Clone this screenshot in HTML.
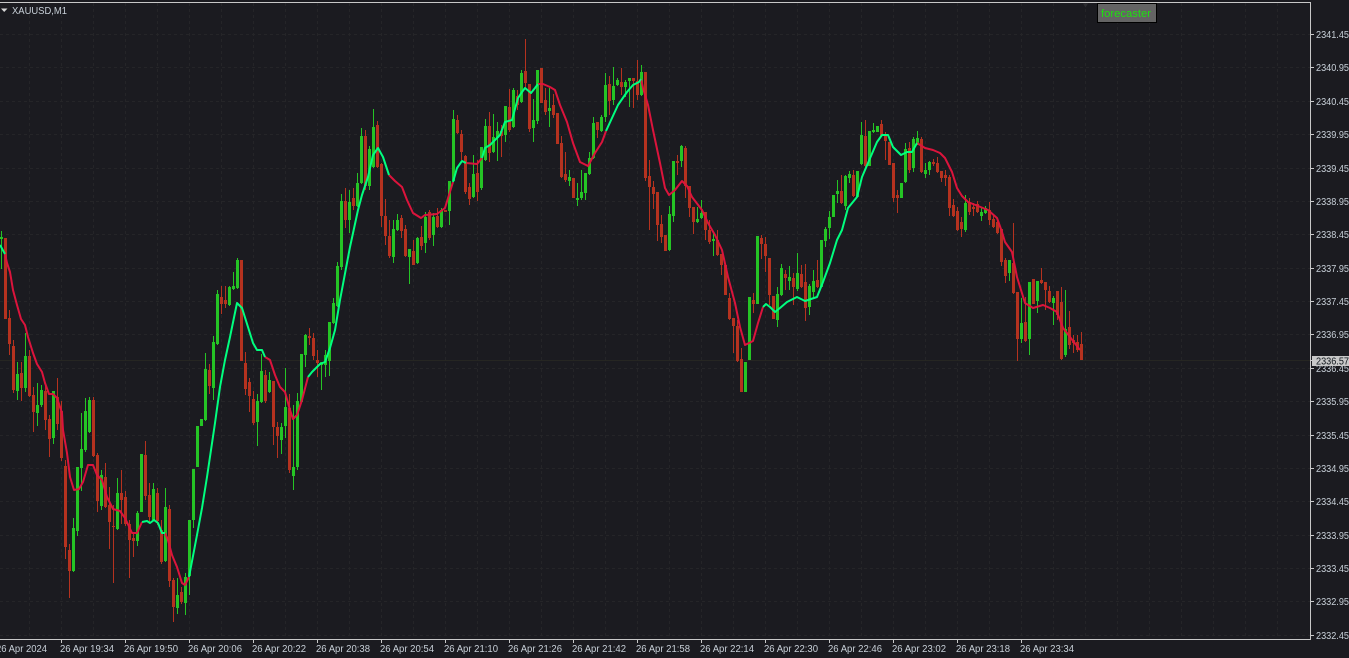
<!DOCTYPE html>
<html><head><meta charset="utf-8"><title>XAUUSD,M1</title>
<style>
html,body{margin:0;padding:0;background:#1b1b20;width:1349px;height:658px;overflow:hidden}
svg{display:block;font-family:"Liberation Sans",sans-serif}
.p text{font-size:10px;fill:#c8d0d8}
.t text{font-size:10px;fill:#c8d0d8}
</style></head><body>
<svg width="1349" height="658" viewBox="0 0 1349 658" xmlns="http://www.w3.org/2000/svg">
<rect width="1349" height="658" fill="#1b1b20"/>
<g stroke="#252528" stroke-width="1" stroke-dasharray="3 3" fill="none" shape-rendering="crispEdges">
<path d="M29.5 3V639M61.5 3V639M93.5 3V639M125.5 3V639M157.5 3V639M189.5 3V639M221.5 3V639M253.5 3V639M285.5 3V639M317.5 3V639M349.5 3V639M381.5 3V639M413.5 3V639M445.5 3V639M477.5 3V639M509.5 3V639M541.5 3V639M573.5 3V639M605.5 3V639M637.5 3V639M669.5 3V639M701.5 3V639M733.5 3V639M765.5 3V639M797.5 3V639M829.5 3V639M861.5 3V639M893.5 3V639M925.5 3V639M957.5 3V639M989.5 3V639M1021.5 3V639M1053.5 3V639M1085.5 3V639M1117.5 3V639M1149.5 3V639M1181.5 3V639M1213.5 3V639M1245.5 3V639M1277.5 3V639"/>
<path d="M0 34.5H1310M0 67.5H1310M0 101.5H1310M0 134.5H1310M0 168.5H1310M0 201.5H1310M0 234.5H1310M0 268.5H1310M0 301.5H1310M0 334.5H1310M0 368.5H1310M0 401.5H1310M0 435.5H1310M0 468.5H1310M0 501.5H1310M0 535.5H1310M0 568.5H1310M0 601.5H1310M0 635.5H1310"/>
</g>
<path d="M0 360.5H1310" stroke="#262622" stroke-width="1" shape-rendering="crispEdges"/>
<g transform="translate(.5 0)" fill="none" shape-rendering="crispEdges">
<path stroke="#b5321f" stroke-width="1" d="M9 310V355M13 340V393M21 362V401M29 350V397M33 387V432M45 383V430M49 415V457M57 378V430M61 401V461M65 460V559M69 544V598M93 397V457M97 453V512M105 463V508M109 487V549M113 505V583M121 470V524M125 491V526M129 520V578M133 533V557M145 441V500M149 483V522M157 488V525M161 520V564M169 505V587M173 578V622M181 587V604M209 364V394M221 286V314M225 286V308M245 352V395M249 378V412M253 391V425M265 370V403M273 381V445M277 422V458M289 394V473M309 328V345M313 333V360M317 350V377M345 188V228M353 188V210M365 130V190M377 121V168M381 163V227M385 199V245M389 220V258M401 215V238M405 225V257M413 240V265M421 226V250M429 210V240M437 208V228M457 115V134M461 130V160M465 155V194M469 183V205M477 160V201M489 112V162M501 125V157M509 89V132M517 90V110M525 39V88M529 84V132M545 88V115M553 94V118M561 136V178M565 152V182M597 122V138M609 76V115M621 68V95M633 78V108M637 60V100M645 72V181M649 160V230M653 181V209M657 192V241M661 215V243M677 155V175M685 146V198M689 186V217M693 207V234M705 212V240M709 220V244M717 230V256M721 254V275M729 293V320M733 318V353M737 320V362M741 348V392M753 293V313M761 235V259M765 237V272M769 258V305M785 270V290M793 273V305M801 265V288M805 264V321M817 260V288M841 175V204M853 170V197M865 120V167M881 120V137M885 132V160M893 163V202M897 190V213M909 142V173M921 137V173M933 159V166M937 157V173M941 171V182M945 170V186M949 175V216M953 199V217M957 207V231M961 217V237M969 198V215M973 203V216M977 201V213M989 202V225M993 215V228M997 218V234M1001 229V266M1005 258V283M1013 223V294M1017 292V361M1025 297V342M1041 268V284M1045 282V310M1049 286V303M1057 291V320M1061 287V360M1069 311V349M1073 335V353M1077 335V352M1081 332V360"/>
<path stroke="#25c425" stroke-width="1" d="M1 231V269M17 362V400M25 333V392M37 383V426M41 385V407M53 391V444M73 518V572M77 467V536M81 413V491M85 398V452M89 397V433M101 470V510M117 478V530M137 511V546M153 483V521M165 488V562M177 578V614M185 573V615M189 520V595M193 469V528M205 353V421M213 336V400M217 290V345M229 286V306M233 272V290M237 258V289M257 394V446M261 354V403M269 372V393M281 423V454M285 368V438M293 405V490M297 393V470M305 334V367M321 362V390M325 350V377M329 322V376M333 298V324M337 262V307M341 194V270M349 190V233M357 173V207M361 128V184M369 146V190M373 109V168M393 220V263M397 214V231M409 249V284M417 237V264M425 212V253M433 213V246M441 208V228M449 181V225M453 110V182M473 155V198M481 147V190M485 119V161M493 114V153M497 122V161M505 106V142M513 88V128M521 70V103M533 99V142M537 70V124M549 88V127M569 170V186M577 183V206M581 170V200M585 173V200M589 152V175M593 117V159M601 115V132M605 73V122M613 67V105M617 78V86M625 80V97M629 78V107M641 65V96M669 206V251M673 161V222M681 145V167M697 207V223M701 200V219M713 232V256M777 287V327M781 264V296M789 266V290M797 253V291M809 284V315M813 270V298M825 227V247M829 211V239M837 180V203M845 175V210M849 171V183M861 122V165M873 123V133M905 143V183M913 137V172M917 131V145M925 163V178M929 161V175M965 195V232M981 207V221M985 206V214M1009 260V281M1021 298V343M1029 282V355M1037 281V313M1053 296V325M1065 290V357"/>
<path stroke="#b5321f" stroke-width="3" d="M5 238V319M9 318V344M13 346V390M21 373V388M29 356V396M33 395V412M45 391V420M49 419V439M57 397V424M61 411V458M65 466V547M69 550V571M93 400V456M97 455V501M105 477V507M109 505V522M113 526V527M121 493V500M125 497V524M129 524V540M133 538V541M145 455V496M149 495V517M157 493V521M161 530V562M169 509V581M173 580V607M181 592V602M209 370V386M221 297V304M225 300V304M241 260V361M245 363V389M249 382V396M253 399V423M265 375V401M273 381V427M277 427V436M289 408V470M309 336V338M313 338V356M317 360V363M345 201V220M353 198V206M365 136V186M377 125V167M381 164V216M385 216V236M389 236V256M401 218V231M405 229V256M413 251V265M421 237V246M429 212V238M437 216V227M445 210V212M457 120V133M461 134V152M465 156V192M469 187V199M477 173V192M489 126V153M501 131V136M509 107V130M517 96V105M525 71V83M529 84V129M541 68V103M545 100V112M553 105V115M557 113V144M561 143V177M565 174V180M573 178V198M597 122V130M609 84V101M621 82V87M633 78V81M637 81V95M645 72V178M649 176V187M653 187V194M657 192V225M661 224V237M665 235V251M677 161V163M685 148V186M689 186V208M693 207V222M705 212V230M709 230V242M717 240V255M721 254V265M725 265V295M729 298V319M733 318V326M737 326V361M741 359V392M753 300V304M761 238V244M765 244V256M769 258V295M773 296V319M785 274V278M793 278V287M801 274V287M805 282V308M817 280V287M841 191V203M853 175V196M865 136V166M881 124V136M885 135V141M889 142V165M893 163V198M897 195V198M909 148V170M921 139V172M933 162V164M937 163V172M941 171V178M945 175V178M949 177V208M953 205V216M957 211V230M961 222V229M969 203V212M973 207V209M977 204V212M989 210V220M993 219V227M997 222V233M1001 229V262M1005 260V276M1013 263V293M1017 292V339M1025 322V341M1033 279V304M1041 280V283M1045 282V290M1049 291V302M1057 291V315M1061 302V359M1069 327V345M1073 340V343M1077 342V350M1081 344V360"/>
<path stroke="#25c425" stroke-width="3" d="M1 237V239M17 374V391M25 356V388M37 405V413M41 390V405M53 391V438M73 528V571M77 467V531M81 449V468M85 411V450M89 400V432M101 475V506M117 493V529M137 513V541M141 454V512M153 489V520M165 507V561M177 595V608M185 577V603M189 520V576M193 469V520M197 426V467M201 419V426M205 369V420M213 342V388M217 294V344M229 287V305M233 286V289M237 260V288M257 401V422M261 371V402M269 380V392M281 427V440M285 407V426M293 467V476M297 401V467M301 354V402M305 335V355M321 362V365M325 355V365M329 322V361M333 303V323M337 266V306M341 201V267M349 202V220M357 183V206M361 136V183M369 149V186M373 127V167M393 229V257M397 220V230M409 249V257M417 238V263M425 217V243M433 217V235M441 210V227M449 181V211M453 119V181M473 174V197M481 147V188M485 126V160M493 137V152M497 131V138M505 106V135M513 90V127M521 73V102M533 120V128M537 70V121M549 108V111M569 177V181M577 198V200M581 192V198M585 173V193M589 158V174M593 123V158M601 117V131M605 85V117M613 86V100M617 80V85M625 82V87M629 78V81M641 72V95M669 214V250M673 161V216M681 146V161M697 219V222M701 213V218M713 239V241M745 362V392M749 297V360M757 236V304M777 294V320M781 268V295M789 277V281M797 273V289M809 286V307M813 281V292M821 240V287M825 229V241M829 217V228M833 195V217M837 191V194M845 176V206M849 174V178M857 171V197M861 135V164M869 131V166M873 130V132M877 126V132M901 183V198M905 149V182M913 139V168M917 138V144M925 170V174M929 162V170M965 203V230M981 212V216M985 208V213M1009 260V273M1021 323V339M1029 282V339M1037 281V301M1053 298V303M1065 329V355"/>
</g>
<g fill="none" stroke-width="2" stroke-linejoin="round">
<g stroke="#dc143c">
<polyline points="5,254 7,263 10,272 13,290 17,305 21,319 25,325 28,337 33,353 37,364 42,372 45,383 49,394 53,394 57,398 62,413 63,430 67,453 70,477 74,490 79,489 83,482 88,465 93,465 97,475 102,480 107,497 113,509 120,511 125,518 132,533 137,533 142,522"/>
<polyline points="165,533 168,540 172,555 177,567 182,583 185,585 189,577"/>
<polyline points="265,357 270,360 275,375 280,387 285,392 290,410 293,419 297,415 302,400 308,377"/>
<polyline points="389,175 395,181 402,187 407,200 413,213 421,218 425,215 437,214 445,208 449,195 453,182"/>
<polyline points="466,163 477,164 482,158"/>
<polyline points="538,84 543,84 550,87 555,90 560,105 567,122 573,143 580,162 588,166 595,153 602,142 606,131"/>
<polyline points="641,79 643,88 648,105 653,130 660,163 665,188 669,195 675,190 682,181 687,186 692,197 702,210 708,223 715,235 722,250 728,277 735,303 740,327 745,345 753,341 758,323 763,307"/>
<polyline points="917,143 925,148 933,150 940,153 945,158 952,172 957,188 962,196 968,202 978,206 988,210 997,218 1002,232 1005,242 1012,252 1017,277 1025,303 1033,308 1043,305 1050,308 1057,312 1063,328 1070,337 1080,350"/>
</g>
<g stroke="#00ff7f">
<polyline points="0,245 5,254"/>
<polyline points="142,522 147,521 150,523 154,520 158,523 162,533 165,533"/>
<polyline points="189,577 197,535 202,508 207,477 211,450 215,423 220,387 225,360 230,337 237,303 242,308 248,327 253,343 257,350 262,350 265,357"/>
<polyline points="308,377 312,372 320,364 325,362 330,348 335,330 340,300 350,247 358,210 362,195 368,177 373,155 378,148 383,157 389,175"/>
<polyline points="453,182 457,168 462,161 466,163"/>
<polyline points="482,158 485,148 490,145 500,135 505,122 512,120 518,98 522,92 525,88 531,93 535,88 538,84"/>
<polyline points="606,131 618,105 627,92 633,85 639,82 641,79"/>
<polyline points="763,307 766,304 770,307 775,312 780,308 787,302 797,297 805,301 817,297 823,282 830,263 837,240 842,230 848,208 857,197 862,177 868,163 877,142 882,135 888,135 893,147 901,155 907,152 912,152 917,143"/>
</g>
</g>
<g shape-rendering="crispEdges" stroke="#c8c8c8" fill="none">
<path d="M0 2.5H1310.5V639.5H0"/>
<path d="M1311 34.5h3M1311 67.5h3M1311 101.5h3M1311 134.5h3M1311 168.5h3M1311 201.5h3M1311 234.5h3M1311 268.5h3M1311 301.5h3M1311 334.5h3M1311 368.5h3M1311 401.5h3M1311 435.5h3M1311 468.5h3M1311 501.5h3M1311 535.5h3M1311 568.5h3M1311 601.5h3M1311 635.5h3"/>
<path d="M61.5 640v3M125.5 640v3M189.5 640v3M253.5 640v3M317.5 640v3M381.5 640v3M445.5 640v3M509.5 640v3M573.5 640v3M637.5 640v3M701.5 640v3M765.5 640v3M829.5 640v3M893.5 640v3M957.5 640v3M1021.5 640v3"/>
</g>
<g class="p">
<text x="1316" y="38" textLength="33" lengthAdjust="spacingAndGlyphs">2341.45</text>
<text x="1316" y="71" textLength="33" lengthAdjust="spacingAndGlyphs">2340.95</text>
<text x="1316" y="105" textLength="33" lengthAdjust="spacingAndGlyphs">2340.45</text>
<text x="1316" y="138" textLength="33" lengthAdjust="spacingAndGlyphs">2339.95</text>
<text x="1316" y="172" textLength="33" lengthAdjust="spacingAndGlyphs">2339.45</text>
<text x="1316" y="205" textLength="33" lengthAdjust="spacingAndGlyphs">2338.95</text>
<text x="1316" y="238" textLength="33" lengthAdjust="spacingAndGlyphs">2338.45</text>
<text x="1316" y="272" textLength="33" lengthAdjust="spacingAndGlyphs">2337.95</text>
<text x="1316" y="305" textLength="33" lengthAdjust="spacingAndGlyphs">2337.45</text>
<text x="1316" y="338" textLength="33" lengthAdjust="spacingAndGlyphs">2336.95</text>
<text x="1316" y="372" textLength="33" lengthAdjust="spacingAndGlyphs">2336.45</text>
<text x="1316" y="405" textLength="33" lengthAdjust="spacingAndGlyphs">2335.95</text>
<text x="1316" y="439" textLength="33" lengthAdjust="spacingAndGlyphs">2335.45</text>
<text x="1316" y="472" textLength="33" lengthAdjust="spacingAndGlyphs">2334.95</text>
<text x="1316" y="505" textLength="33" lengthAdjust="spacingAndGlyphs">2334.45</text>
<text x="1316" y="539" textLength="33" lengthAdjust="spacingAndGlyphs">2333.95</text>
<text x="1316" y="572" textLength="33" lengthAdjust="spacingAndGlyphs">2333.45</text>
<text x="1316" y="605" textLength="33" lengthAdjust="spacingAndGlyphs">2332.95</text>
<text x="1316" y="639" textLength="33" lengthAdjust="spacingAndGlyphs">2332.45</text>
</g>
<rect x="1312" y="356" width="37" height="10" fill="#c8c8c8"/>
<path d="M1311 360.5h1" stroke="#c8c8c8" shape-rendering="crispEdges"/>
<text x="1316" y="364.5" font-size="10" fill="#10161c" textLength="33" lengthAdjust="spacingAndGlyphs">2336.57</text>
<g class="t">
<text x="-4" y="652" textLength="51" lengthAdjust="spacingAndGlyphs">26 Apr 2024</text>
<text x="60" y="652" textLength="54" lengthAdjust="spacingAndGlyphs">26 Apr 19:34</text>
<text x="124" y="652" textLength="54" lengthAdjust="spacingAndGlyphs">26 Apr 19:50</text>
<text x="188" y="652" textLength="54" lengthAdjust="spacingAndGlyphs">26 Apr 20:06</text>
<text x="252" y="652" textLength="54" lengthAdjust="spacingAndGlyphs">26 Apr 20:22</text>
<text x="316" y="652" textLength="54" lengthAdjust="spacingAndGlyphs">26 Apr 20:38</text>
<text x="380" y="652" textLength="54" lengthAdjust="spacingAndGlyphs">26 Apr 20:54</text>
<text x="444" y="652" textLength="54" lengthAdjust="spacingAndGlyphs">26 Apr 21:10</text>
<text x="508" y="652" textLength="54" lengthAdjust="spacingAndGlyphs">26 Apr 21:26</text>
<text x="572" y="652" textLength="54" lengthAdjust="spacingAndGlyphs">26 Apr 21:42</text>
<text x="636" y="652" textLength="54" lengthAdjust="spacingAndGlyphs">26 Apr 21:58</text>
<text x="700" y="652" textLength="54" lengthAdjust="spacingAndGlyphs">26 Apr 22:14</text>
<text x="764" y="652" textLength="54" lengthAdjust="spacingAndGlyphs">26 Apr 22:30</text>
<text x="828" y="652" textLength="54" lengthAdjust="spacingAndGlyphs">26 Apr 22:46</text>
<text x="892" y="652" textLength="54" lengthAdjust="spacingAndGlyphs">26 Apr 23:02</text>
<text x="956" y="652" textLength="54" lengthAdjust="spacingAndGlyphs">26 Apr 23:18</text>
<text x="1020" y="652" textLength="54" lengthAdjust="spacingAndGlyphs">26 Apr 23:34</text>
</g>
<path d="M1 8.500H7.500L4.200 12Z" fill="#d8d8d8"/>
<text x="12" y="14" font-size="10" fill="#c8d0d8" textLength="55" lengthAdjust="spacingAndGlyphs">XAUUSD,M1</text>
<path d="M1083 3.500h5l-2.500 4z" fill="#2e2e32"/>
<rect x="1097.500" y="3.500" width="59" height="19" fill="#646464" stroke="#000" shape-rendering="crispEdges"/>
<text x="1101" y="17" font-size="11" fill="#1fe010" textLength="50" lengthAdjust="spacingAndGlyphs">forecaster</text>
</svg>
</body></html>
